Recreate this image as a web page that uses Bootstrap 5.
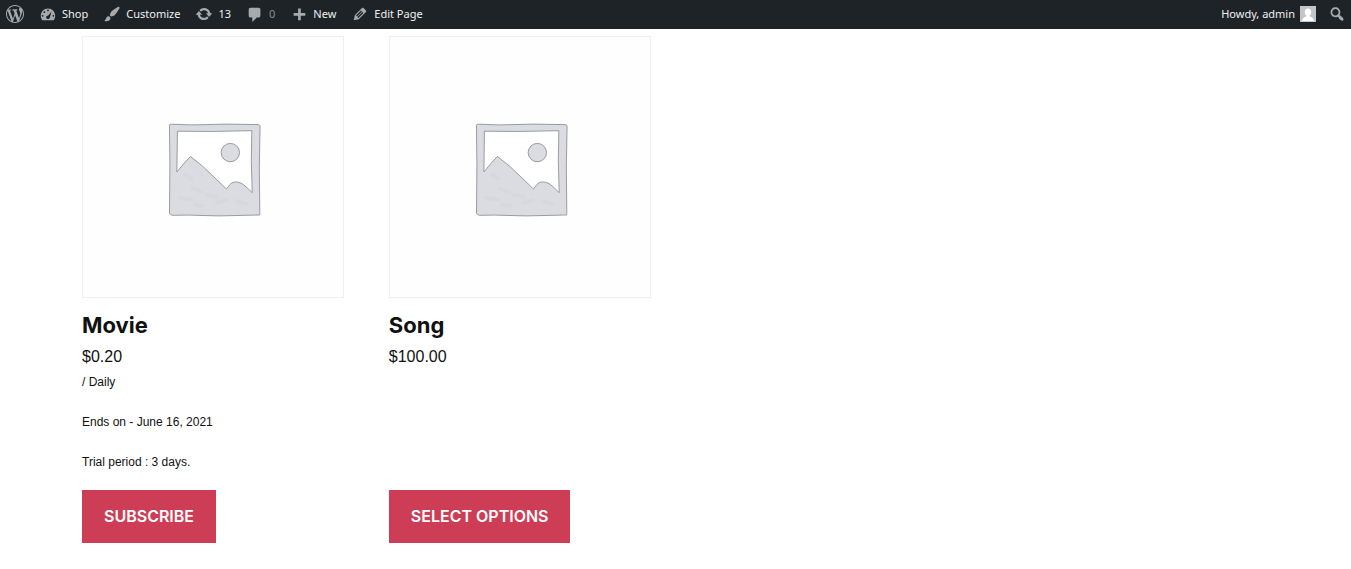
<!DOCTYPE html>
<html lang="en">
<head>
<meta charset="utf-8">
<meta name="viewport" content="width=device-width, initial-scale=1">
<title>Shop</title>
<link href="https://cdn.jsdelivr.net/npm/bootstrap@5.3.0/dist/css/bootstrap.min.css" rel="stylesheet">
<style>
  body { font-family: "Liberation Sans", sans-serif; color: #111; background: #fff; }
  a { text-decoration: none; }

  .admin-bar { background: #1d2327; height: 29px; font: 11px/28px "Noto Sans", sans-serif; padding: 0 5px 1px 6px; }
  .admin-bar a { color: #f0f0f1; }
  .admin-bar svg { width: 18px; height: 18px; fill: #a7aaad; flex: none; }
  .admin-bar .bar-group { gap: 15px; }
  .admin-bar .bar-user { gap: 12px; }
  .admin-bar .bar-link { gap: 5px; }
  .admin-bar .bar-link.dim { color: #8c8f94; }
  .admin-bar .bar-link .avatar { width: 16px; height: 16px; }

  .shop { max-width: 1187px; padding-top: 7px; padding-bottom: 26px; }
  .products { gap: 3.8%; }
  .product { width: 22.05%; }
  .thumb { aspect-ratio: 1; border: 1px solid #f0f0f0; background: #fefefe; margin-bottom: 11px; }
  .thumb svg { width: 100%; height: 100%; display: block; }
  .product h2 { font: 700 22px/32px Inter, sans-serif; margin: 0; color: #111; }
  .price { font-size: 16px; line-height: 32px; color: #111; }
  .terms { font-size: 12px; line-height: 18px; }
  .terms p { margin: 0 0 22px; }
  .terms p:last-child { margin-bottom: 19px; }
  .btn-shop { --bs-btn-bg: #cd3d55; --bs-btn-color: #fff; --bs-btn-border-color: #cd3d55;
    --bs-btn-hover-bg: #b5314a; --bs-btn-hover-color: #fff; --bs-btn-border-radius: 0; --bs-btn-border-width: 0;
    font: 600 16px/21px Inter, sans-serif; padding: 16px 22px; }
</style>
</head>
<body>
<nav class="admin-bar d-flex justify-content-between" aria-label="Toolbar">
  <div class="bar-group d-flex">
    <a href="#" class="bar-link d-flex align-items-center" aria-label="About WordPress">
      <svg viewBox="0 0 20 20"><path d="M20 10c0-5.51-4.49-10-10-10C4.48 0 0 4.49 0 10c0 5.52 4.48 10 10 10 5.51 0 10-4.48 10-10zM7.78 15.37L4.37 6.22c.55-.02 1.17-.08 1.17-.08.5-.06.44-1.13-.06-1.11 0 0-1.45.11-2.37.11-.18 0-.37 0-.58-.01C4.12 2.69 6.87 1.11 10 1.11c2.33 0 4.45.87 6.05 2.34-.68-.11-1.65.39-1.65 1.58 0 .74.45 1.36.9 2.1.35.61.55 1.36.55 2.46 0 1.49-1.4 5-1.4 5l-3.03-8.37c.54-.02.82-.17.82-.17.5-.05.44-1.25-.06-1.22 0 0-1.44.12-2.38.12-.87 0-2.33-.12-2.33-.12-.5-.03-.56 1.2-.06 1.22l.92.08 1.26 3.41zM17.41 10c.24-.64.74-1.87.43-4.25.7 1.29 1.05 2.71 1.05 4.25 0 3.29-1.73 6.24-4.4 7.78.97-2.59 1.94-5.2 2.92-7.78zM6.1 18.09C3.12 16.65 1.11 13.53 1.11 10c0-1.3.23-2.48.72-3.59C3.25 10.3 4.67 14.2 6.1 18.09zm4.03-6.63l2.58 6.98c-.86.29-1.76.45-2.71.45-.79 0-1.57-.11-2.29-.33.81-2.38 1.62-4.74 2.42-7.1z"/></svg>
    </a>
    <a href="#" class="bar-link d-flex align-items-center">
      <svg viewBox="0 0 20 20"><path fill-rule="evenodd" d="M3.76 17h12.48c1.1-1.37 1.76-3.11 1.76-5 0-4.42-3.58-8-8-8s-8 3.58-8 8c0 1.89.66 3.63 1.76 5zM9 6a1 1 0 1 1 2 0 1 1 0 0 1-2 0zM5 8a1 1 0 1 1 2 0 1 1 0 0 1-2 0zM13.800 7.400l-1.600 6.200c-.3 1.300-1.100 2-2.200 2-1.200 0-2-.9-2-2 0-1.200.9-2 2.200-2zM3 12a1 1 0 1 1 2 0 1 1 0 0 1-2 0zM15 12a1 1 0 1 1 2 0 1 1 0 0 1-2 0z"/></svg>
      <span>Shop</span></a>
    <a href="#" class="bar-link d-flex align-items-center">
      <svg viewBox="0 0 20 20"><path d="M18.33 3.57s.27-.8-.31-1.36c-.53-.52-1.22-.24-1.22-.24-.61.3-5.76 3.47-7.67 5.57-.86.96-2.06 3.79-1.09 4.82.92.98 3.96-.17 4.79-1 2.06-2.06 5.21-7.17 5.5-7.79zM1.4 17.65c2.37-1.56 1.46-3.41 3.23-4.64.93-.65 2.22-.62 3.08.29.63.67.8 2.57-.16 3.46-1.57 1.45-4 1.55-6.15.89z"/></svg>
      <span>Customize</span></a>
    <a href="#" class="bar-link d-flex align-items-center" aria-label="13 updates available">
      <svg viewBox="0 0 20 20"><path d="M10.2 3.28c3.53 0 6.43 2.61 6.92 6h2.08l-3.5 4-3.5-4h2.32c-.45-1.97-2.21-3.45-4.32-3.45-1.45 0-2.73.71-3.54 1.78L4.95 5.66C6.23 4.2 8.11 3.28 10.2 3.28zm-.4 13.44c-3.52 0-6.43-2.61-6.92-6H.8l3.5-4c1.17 1.33 2.33 2.67 3.5 4H5.48c.45 1.97 2.21 3.45 4.32 3.45 1.45 0 2.73-.71 3.54-1.78l1.71 1.95c-1.28 1.46-3.15 2.38-5.25 2.38z"/></svg>
      <span>13</span></a>
    <a href="#" class="bar-link dim d-flex align-items-center" aria-label="0 comments">
      <svg viewBox="0 0 20 20"><path d="M5 3h9c1.100 0 2 .9 2 2v7c0 1.100-.9 2-2 2h-2l-5 5v-5H5c-1.100 0-2-.9-2-2V5c0-1.100.9-2 2-2z"/></svg>
      <span>0</span></a>
    <a href="#" class="bar-link d-flex align-items-center">
      <svg viewBox="0 0 20 20"><path d="M17 9v3h-5v5H9v-5H4V9h5V4h3v5z"/></svg>
      <span>New</span></a>
    <a href="#" class="bar-link d-flex align-items-center">
      <svg viewBox="0 0 20 20"><path d="M13.89 3.39l2.71 2.72c.46.46.42 1.24.03 1.64l-8.01 8.02-5.56 1.16 1.16-5.58s7.6-7.63 7.99-8.03c.39-.39 1.22-.39 1.68.07zm-2.73 2.79l-5.59 5.61 1.11 1.11 5.54-5.65zm-2.97 8.23l5.58-5.6-1.07-1.08-5.59 5.6z"/></svg>
      <span>Edit Page</span></a>
  </div>
  <div class="bar-user d-flex">
    <a href="#" class="bar-link d-flex align-items-center"><span>Howdy, admin</span>
      <svg class="avatar" viewBox="0 0 16 16"><path fill="#c3c4c7" d="M0 0h16v16H0z"/><path fill="#fff" d="M8 2.500c2 0 3.200 1.500 3.200 3.500 0 1.600-.6 2.900-1.500 3.600v1c1.900.5 3.800 1.400 4.300 4.400H2c.5-3 2.400-3.900 4.300-4.400v-1C5.400 8.900 4.800 7.600 4.800 6c0-2 1.200-3.500 3.200-3.500z"/></svg></a>
    <a href="#" class="bar-link d-flex align-items-center" aria-label="Search">
      <svg viewBox="0 0 20 20"><path d="M12.14 4.18c1.87 1.87 2.11 4.75.72 6.89.12.1.22.21.36.31.2.16.47.36.81.59.34.24.56.39.66.47.42.31.73.57.94.78.32.32.6.65.84 1 .25.35.44.69.59 1.04.14.35.21.68.18 1-.02.32-.14.59-.36.81s-.49.34-.81.36c-.31.02-.65-.04-.99-.19-.35-.14-.7-.34-1.04-.59-.35-.24-.68-.52-1-.84-.21-.21-.47-.52-.77-.93-.1-.13-.25-.35-.47-.66-.22-.32-.4-.57-.56-.78-.16-.2-.29-.35-.44-.5-2.07 1.09-4.69.76-6.44-.98-2.14-2.15-2.14-5.64 0-7.78 2.15-2.15 5.63-2.15 7.78 0zm-1.41 6.36c1.36-1.37 1.36-3.58 0-4.95-1.37-1.37-3.59-1.37-4.95 0-1.37 1.37-1.37 3.58 0 4.95 1.36 1.37 3.58 1.37 4.95 0z"/></svg></a>
  </div>
</nav>

<svg class="d-none" aria-hidden="true">
  <symbol id="placeholder" viewBox="0 0 260 260">
    <g fill="#dbdce1" stroke="#85868b" stroke-width=".8" stroke-linejoin="round">
      <path d="M86.500 88.300q.5-1.500 2-1L110 88l34-.8 31.300.5q2 .2 2 2l-.8 40.400.5 46.600-.4 1.500-40.600.9-31-.8-15.500.2q-2-.2-2.900-2l.4-50z"/>
      <path fill="#fff" d="M94.500 94.300l33.500.3 41-.8-.5 31 .9 31-4.600-4.500-4.500-3.800c-6-3.800-12-3-14.500 2l-2.300 2.600-4-4-20-19-12-9.500-6.500 7-7 8.500z"/>
      <circle cx="147.500" cy="115.700" r="9.200"/>
    </g>
    <g fill="none" stroke="#d2d3d9" stroke-width="4" stroke-linecap="round" opacity=".4">
      <path d="M102 138l7 4M110 152l9 3M96 161l12 2M124 158l10 2M134 166l9-3M112 168l8 1M154 164l9 3"/>
    </g>
  </symbol>
</svg>

<main class="shop mx-auto">
  <div class="products d-flex">
    <article class="product d-flex flex-column align-items-start">
      <a href="#" class="thumb d-block w-100" aria-label="Movie"><svg><use href="#placeholder"/></svg></a>
      <h2>Movie</h2>
      <div class="price">$0.20</div>
      <div class="terms"><p>/ Daily</p><p>Ends on - June 16, 2021</p><p>Trial period : 3 days.</p></div>
      <button type="button" class="btn btn-shop mt-auto">SUBSCRIBE</button>
    </article>
    <article class="product d-flex flex-column align-items-start">
      <a href="#" class="thumb d-block w-100" aria-label="Song"><svg><use href="#placeholder"/></svg></a>
      <h2>Song</h2>
      <div class="price">$100.00</div>
      <button type="button" class="btn btn-shop mt-auto">SELECT OPTIONS</button>
    </article>
  </div>
</main>
<script src="https://cdn.jsdelivr.net/npm/bootstrap@5.3.0/dist/js/bootstrap.bundle.min.js"></script>
</body>
</html>
